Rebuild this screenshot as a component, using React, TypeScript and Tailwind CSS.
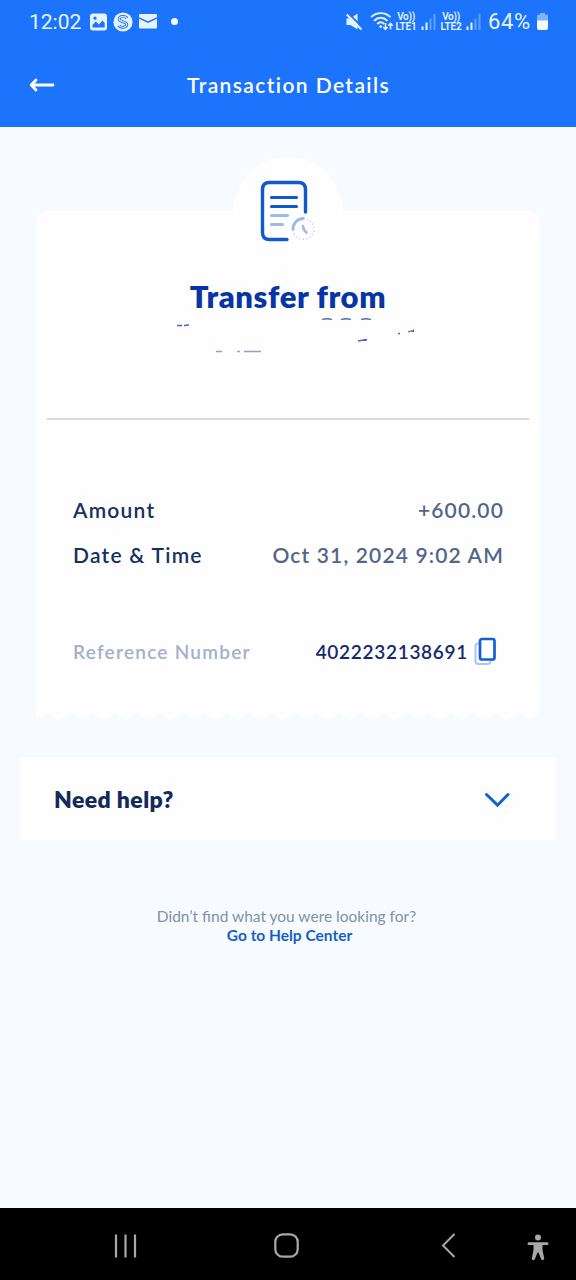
import type { ReactNode } from "react"

interface RowProps {
  label: string
  children: ReactNode
}

function StatusBar() {
  return (
    <div className="flex h-[43px] items-center justify-between pl-[29px] pr-[28px] text-[#e6f3ff]">
      <div className="flex items-center">
        <span className="w-[53px] whitespace-nowrap pt-[1px] font-['Roboto',sans-serif] text-[21px] leading-none">12:02</span>
        <svg className="ml-[8px] h-[18px] w-[17px]" viewBox="0 0 17 18">
          <rect x="0" y="0.5" width="17" height="17" rx="3" fill="currentColor" />
          <path d="M2.5 14.5V12l3.3-3.5 3 3 3.7-4 2.2 2.5v4.5z" fill="#1b74fb" />
          <circle cx="5" cy="5.2" r="1.6" fill="#1b74fb" />
        </svg>
        <svg className="ml-[6px] h-[20px] w-[20px]" viewBox="0 0 20 20" fill="none">
          <circle cx="10" cy="10" r="9.6" fill="currentColor" />
          <path d="M14 6.4C12.8 3.8 6.2 3.8 6.2 7.2c0 3.2 7.6 2 7.6 5.4 0 3.4-6.8 3.5-8 .8" stroke="#1b74fb" strokeWidth="2.9" />
          <path d="M14.4 6.7C12.8 3.8 6.2 3.8 6.2 7.2c0 3.2 7.6 2 7.6 5.4 0 3.4-6.8 3.5-8.3.5" stroke="currentColor" strokeWidth="1.1" />
        </svg>
        <svg className="ml-[6px] h-[15px] w-[18px]" viewBox="0 0 18 15">
          <rect width="18" height="14.5" rx="1" fill="currentColor" />
          <path d="M0 4l9 4.2L18 4" stroke="#1b74fb" strokeWidth="1.5" fill="none" />
        </svg>
        <span className="ml-[14px] h-[7px] w-[7px] rounded-full bg-[#f2f9ff]" />
      </div>

      <div className="flex items-center">
        <svg className="h-[18px] w-[17px]" viewBox="0 0 17 18">
          <path d="M0.5 5.5h4L11.5 0.5v16L4.5 12h-4z" fill="currentColor" />
          <path d="M2.2 0L17 15" stroke="#1b74fb" strokeWidth="1.8" />
          <path d="M0.7 1.5L15.5 16.5" stroke="currentColor" strokeWidth="2.2" />
        </svg>
        <svg className="ml-[7px] h-[19px] w-[25px]" viewBox="0 0 25 19" fill="none" stroke="currentColor">
          <path d="M1 5.2C6.5 -0.3 15 -0.3 20.5 5.2" strokeWidth="1.9" />
          <path d="M4 8.8C8 4.8 13.5 4.8 17.5 8.8" strokeWidth="1.9" />
          <path d="M7.2 12C9.5 9.8 12 9.8 14.3 12" strokeWidth="1.9" />
          <circle cx="10.7" cy="14.5" r="1" fill="currentColor" />
          <path d="M15.5 11v6M13.3 15l2.2 2.3 2.2-2.3M20.5 17.5v-6M18.3 13.7l2.2-2.3 2.2 2.3" strokeWidth="1.5" />
        </svg>
        <Lte label="LTE1" />
        <Signal />
        <span className="w-[4px]" />
        <Lte label="LTE2" />
        <Signal />
        <span className="ml-[7px] w-[45px] whitespace-nowrap pt-[1px] font-['Roboto',sans-serif] text-[22px] leading-none tracking-[0.6px]">64%</span>
        <svg className="ml-[4px] h-[17px] w-[11px]" viewBox="0 0 11 17">
          <path d="M3 0h5v1.5h1.5Q11 1.5 11 3v5H0V3q0-1.5 1.5-1.5H3z" fill="#7db3ff" />
          <path d="M0 7.5h11V15q0 2-2 2H2q-2 0-2-2z" fill="#f5faff" />
        </svg>
      </div>
    </div>
  )
}

function Lte({ label }: { label: string }) {
  return (
    <div className="flex w-[22px] flex-col items-center whitespace-nowrap font-['Roboto',sans-serif] text-[10px] font-semibold leading-[9.5px]">
      <span className="tracking-[-0.3px]">Vo))</span>
      <span className="tracking-[-0.2px]">{label}</span>
    </div>
  )
}

function Signal() {
  return (
    <svg className="ml-[4px] h-[16px] w-[15px]" viewBox="0 0 15 16">
      <rect x="0.5" y="12.5" width="2" height="3.5" fill="currentColor" />
      <rect x="4.5" y="8.5" width="2" height="7.5" fill="currentColor" />
      <rect x="8.5" y="4.5" width="2" height="11.5" fill="#5f9ffd" />
      <rect x="12.5" y="0" width="2" height="16" fill="#5f9ffd" />
    </svg>
  )
}

function ReceiptIcon() {
  return (
    <svg className="h-[64px] w-[56px]" viewBox="0 0 56 64" fill="none" strokeLinecap="round">
      <path d="M45.5 32V9.5Q45.5 2.500 38.5 2.5H9.5Q2.5 2.5 2.5 9.5V52.500Q2.5 59.500 9.5 59.500H27" stroke="#1059cf" strokeWidth="3.4" />
      <path d="M11.5 17.5H36.5M11.5 26.500H36.500" stroke="#1059cf" strokeWidth="3.2" />
      <path d="M11.5 35.500H27.500M11.500 44.500H22.500" stroke="#9dbbea" strokeWidth="3.2" />
      <path d="M33 49.5A10.5 10.5 0 0 1 43.5 38.5" stroke="#9dbbea" strokeWidth="2.8" />
      <path d="M47.5 39.3A10.5 10.5 0 1 1 34 53.5" stroke="#b9c5de" strokeWidth="1.3" strokeDasharray="0.1 3.5" />
      <path d="M43 46Q43 49.5 46.5 52.5" stroke="#9dbbea" strokeWidth="2.6" />
    </svg>
  )
}

/* Torn paper edge along the bottom of the receipt */
function TornEdge() {
  return (
    <svg className="block h-[9px] w-[504px]" viewBox="0 0 504 9">
      <defs>
        <pattern id="teeth" width="22.4" height="9" patternUnits="userSpaceOnUse">
          <path d="M0 0H22.4V8L18 5.5L12 0.5L5 5.5L0 8z" fill="#fefefe" />
        </pattern>
      </defs>
      <rect width="504" height="9" fill="url(#teeth)" />
    </svg>
  )
}

function Row({ label, children }: RowProps) {
  return (
    <div className="flex h-[45px] items-center justify-between text-[21px]">
      <span className="font-semibold tracking-[1.25px] text-[#16305f]">{label}</span>
      <span className="font-semibold tracking-[1.15px] text-[#52658a]">{children}</span>
    </div>
  )
}

export default function App() {
  return (
    <div className="flex h-[1280px] w-[576px] flex-col overflow-hidden bg-[#f7fbff] font-['Lato',sans-serif]">
      <header className="h-[127px] shrink-0 bg-[#1b74fb]">
        <StatusBar />
        <div className="grid h-[84px] grid-cols-[180px_1fr_180px] items-center text-white">
          <svg className="ml-[29px] h-[16px] w-[26px]" viewBox="0 0 26 16" fill="none" stroke="currentColor" strokeWidth="2.8" strokeLinecap="round" strokeLinejoin="round">
            <path d="M24 8H2.5M7 3L2.2 8L7 13" />
          </svg>
          <h1 className="ml-[1px] whitespace-nowrap text-center text-[21px] font-semibold tracking-[1.4px]">Transaction Details</h1>
        </div>
      </header>

      <main className="flex-1 pt-[84px]">
        <section className="mx-[36px] flow-root h-[501px] rounded-t-[12px] bg-[#fefefe]">
          <div className="mx-auto -mt-[54px] flex h-[110px] w-[110px] items-center justify-center rounded-full bg-[#fefefe]">
            <ReceiptIcon />
          </div>
          <div className="mx-[11px] h-[153px] border-b-2 border-[#d6dae3] pt-[9px]">
            <h2 className="text-center text-[31px] font-extrabold leading-[40px] tracking-[0.6px] text-[#0835a5]">Transfer from</h2>
            <svg className="mt-[2px] h-[40px] w-[482px]" viewBox="47 318 482 40" fill="none" stroke="#4c68b5" strokeWidth="1.3">
              <path d="M177 325.5h5M184 325.5l5-.5M322 319.5q5-1.5 10 0M341 319.5q5-1.5 10 0M361 319.5q5-1.5 10 0M358 341l9-1.5M398 333.5h2M408 332l4-1.5" />
              <path d="M411 332l3-3v3zM362 341l5-2-1 2z" fill="#3558b0" stroke="none" />
              <path d="M216 351.5h6M237 351.5h3M244 351.5h17" stroke="#8ba6c4" />
            </svg>
          </div>
          <div className="ml-[37px] mr-[36px] pt-[67px]">
            <Row label="Amount">+600.00</Row>
            <Row label="Date & Time">Oct 31, 2024 9:02 AM</Row>
            <div className="mt-[53px] flex h-[45px] items-center justify-between">
              <span className="text-[19px] font-semibold tracking-[1.25px] text-[#a4afcb]">Reference Number</span>
              <div className="flex items-center">
                <span className="text-[19px] font-semibold tracking-[0.7px] text-[#142a6c]">4022232138691</span>
                <svg className="mb-[3px] ml-[6px] mr-[8px] h-[29px] w-[22px]" viewBox="0 0 22 29" fill="none">
                  <rect x="1.5" y="6.5" width="15" height="20.5" rx="3" stroke="#a9c5fb" strokeWidth="2" />
                  <rect x="6" y="2" width="14.5" height="20.5" rx="2" fill="#fefefe" stroke="#145fd3" strokeWidth="2.7" />
                </svg>
              </div>
            </div>
          </div>
        </section>
        <div className="ml-[36px]">
          <TornEdge />
        </div>

        <section className="mx-[19px] mt-[36px] flex h-[83px] items-center justify-between bg-[#fefefe] pl-[35px] pr-[47px]">
          <h3 className="pt-[2px] text-[23px] font-extrabold tracking-[0.4px] text-[#142a5c]">Need help?</h3>
          <svg className="mt-[2px] h-[16px] w-[26px]" viewBox="0 0 26 16" fill="none" stroke="#1560d0" strokeWidth="3" strokeLinecap="round">
            <path d="M2.5 2.5L13.500 13.2L24 2.5" />
          </svg>
        </section>

        <div className="mt-[67px] text-center text-[15.5px] leading-[19px]">
          <p className="mr-[3px] text-[#8290a8]">Didn’t find what you were looking for?</p>
          <a className="ml-[3px] font-bold text-[#1560c8]">Go to Help Center</a>
        </div>
      </main>

      <nav className="flex h-[72px] shrink-0 items-center bg-black pt-[3px] text-[#a8a8a8]">
        <svg className="ml-[114px] h-[24px] w-[23px]" viewBox="0 0 23 24" stroke="currentColor" strokeWidth="2.2">
          <path d="M2 0.5V23.5M11.5 0.5V23.5M21 0.5V23.5" />
        </svg>
        <svg className="ml-[137px] h-[25px] w-[25px]" viewBox="0 0 25 25" fill="none" stroke="currentColor" strokeWidth="2.2">
          <rect x="1.3" y="1.3" width="22.4" height="22.4" rx="7.5" />
        </svg>
        <svg className="ml-[142px] h-[25px] w-[15px]" viewBox="0 0 15 25" fill="none" stroke="currentColor" strokeWidth="2">
          <path d="M13.5 1L2 12.5L13.5 24" />
        </svg>
        <svg className="ml-[71px] mt-[3px] h-[27px] w-[22px]" viewBox="0 0 22 27" fill="currentColor">
          <circle cx="11" cy="3.5" r="3" />
          <path d="M1.5 8.2H20.5Q21.5 8.4 21.5 9.5T20.5 10.9H15.5V16L17.3 25Q16 27 14.3 25.5L11.5 18.5H10.5L7.7 25.5Q6 27 4.7 25L6.5 16V10.9H1.5Q0.5 10.6 0.5 9.5T1.5 8.2z" />
        </svg>
      </nav>
    </div>
  )
}
